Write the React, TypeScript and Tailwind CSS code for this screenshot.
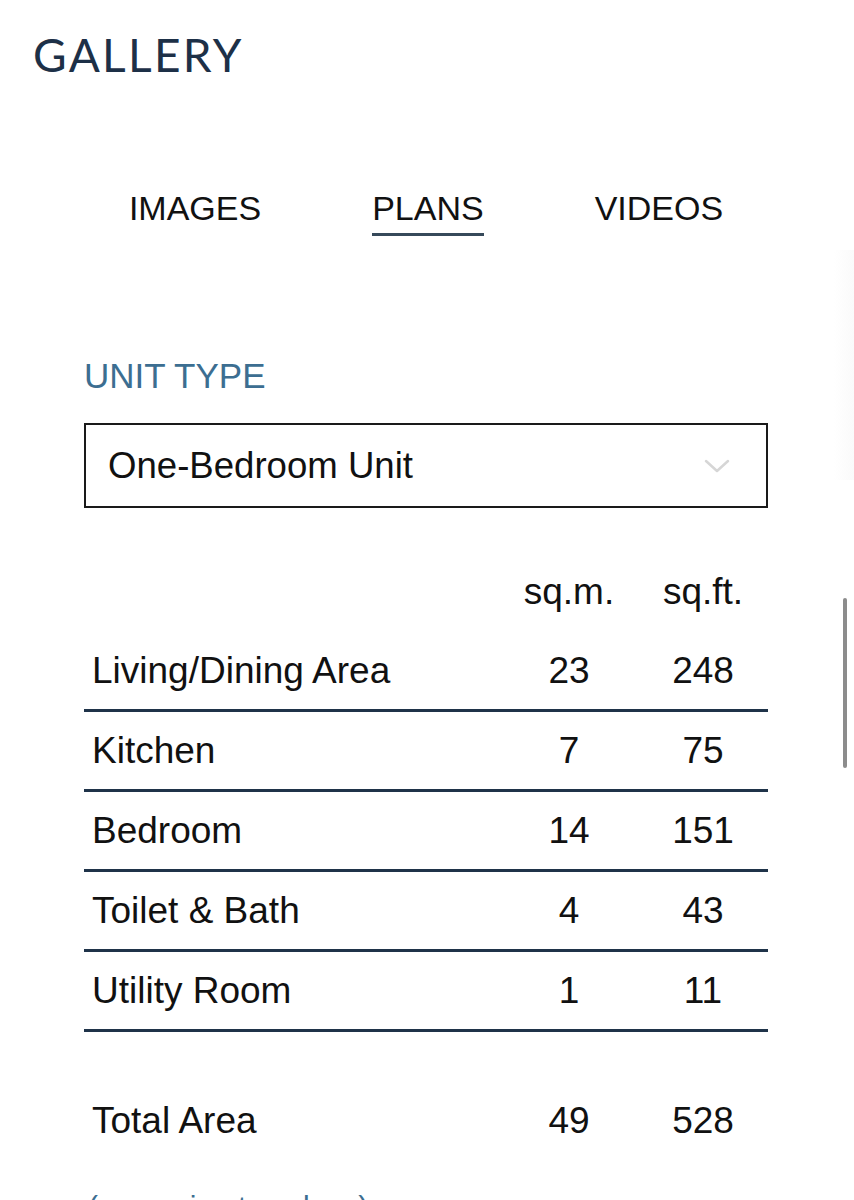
const rows = [
  { label: 'Living/Dining Area', sqm: '23', sqft: '248' },
  { label: 'Kitchen', sqm: '7', sqft: '75' },
  { label: 'Bedroom', sqm: '14', sqft: '151' },
  { label: 'Toilet & Bath', sqm: '4', sqft: '43' },
  { label: 'Utility Room', sqm: '1', sqft: '11' },
];

const tabs = ['IMAGES', 'PLANS', 'VIDEOS'];

export default function App() {
  return (
    <div className="relative w-[854px] h-[1200px] overflow-hidden bg-white font-['Liberation_Sans',Arial,sans-serif] text-[#111]">
      <h1 className="pt-[32px] pl-[33px] font-['Lato',sans-serif] text-[46px] leading-[46px] font-normal tracking-[0.05em] text-[#1d3047]">
        GALLERY
      </h1>

      <div className="ml-[84px] mr-[86px]">
        <div className="mt-[113px] flex justify-center gap-[111px]">
          {tabs.map((t) => (
            <span
              key={t}
              className={
                'text-[34px] leading-[34px] pb-[8px] border-b-[3px] ' +
                (t === 'PLANS' ? 'border-[#36495a]' : 'border-transparent')
              }
            >
              {t}
            </span>
          ))}
        </div>

        <h2 className="mt-[122px] text-[35px] leading-[35px] text-[#3c6e91]">UNIT TYPE</h2>

        <div className="mt-[30px] h-[85px] border-2 border-[#1a1a1a] flex items-center justify-between pl-[22px] pr-[36px]">
          <span className="text-[36.6px] leading-[81px]">One-Bedroom Unit</span>
          <svg width="26" height="14" viewBox="0 0 26 14" fill="none">
            <polyline points="2,2 13,12 24,2" stroke="#d6d6d6" strokeWidth="2.5" strokeLinecap="round" strokeLinejoin="round" />
          </svg>
        </div>

        <div className="mt-[47px] text-[37px]">
          <div className="grid grid-cols-[1fr_130px_130px] gap-x-[4px] leading-[73px] pb-[4px]">
            <span />
            <span className="text-center">sq.m.</span>
            <span className="text-center">sq.ft.</span>
          </div>
          {rows.map((r) => (
            <div
              key={r.label}
              className="grid grid-cols-[1fr_130px_130px] gap-x-[4px] leading-[77px] border-b-[3px] border-[#1f3349]"
            >
              <span className="pl-[8px]">{r.label}</span>
              <span className="text-center">{r.sqm}</span>
              <span className="text-center">{r.sqft}</span>
            </div>
          ))}
          <div className="mt-[50px] grid grid-cols-[1fr_130px_130px] gap-x-[4px] leading-[77px]">
            <span className="pl-[8px]">Total Area</span>
            <span className="text-center">49</span>
            <span className="text-center">528</span>
          </div>
          <p className="mt-[33px] pl-[4px] text-[30px] leading-[30px] text-[#3c6e91]">(approximate values)</p>
        </div>
      </div>

      <div className="absolute right-0 top-[250px] w-[20px] h-[230px] bg-gradient-to-r from-transparent to-[#fafafa]" />
      <div className="absolute right-[7px] top-[598px] w-[4px] h-[170px] rounded-full bg-[#8c8c8c]" />
    </div>
  );
}
